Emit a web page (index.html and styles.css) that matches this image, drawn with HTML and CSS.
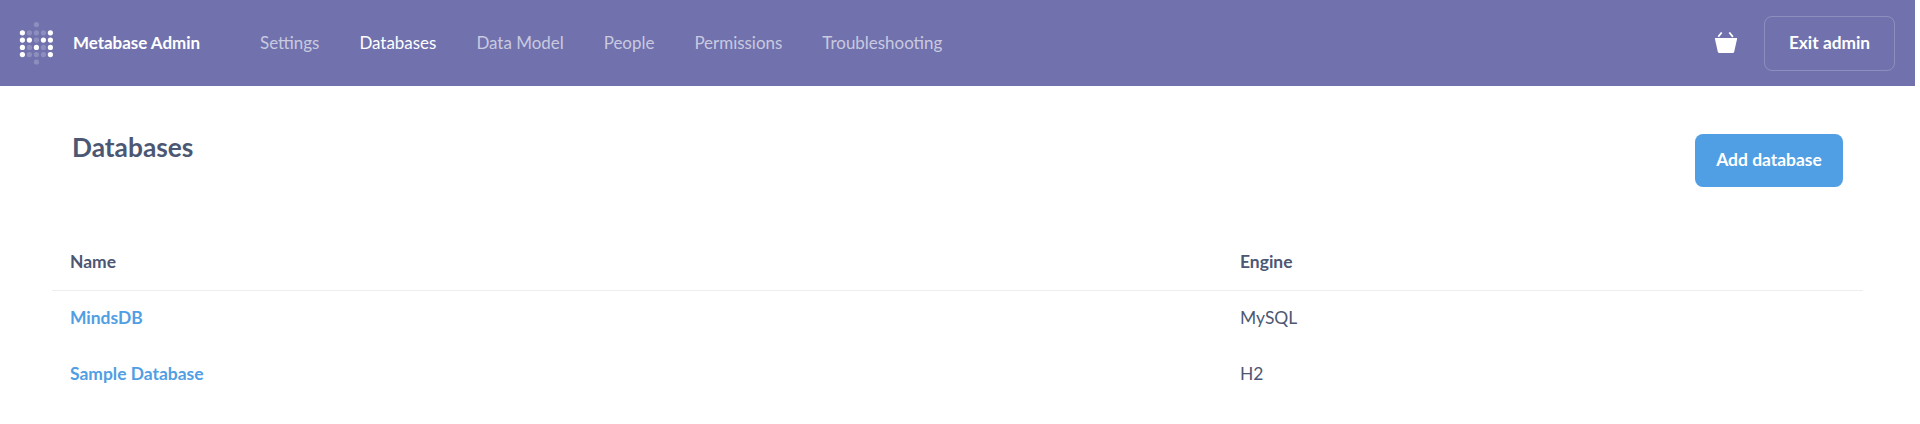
FILE: index.html
```html
<!DOCTYPE html>
<html lang="en">
<head>
<meta charset="utf-8">
<title>Databases - Metabase Admin</title>
<link rel="stylesheet" href="styles.css">
</head>
<body>
<header class="admin-bar">
  <svg class="logo" width="34" height="44" viewBox="0 0 34 44">
    <g fill="#fff">
      <circle cx="3.4" cy="11.8" r="2.6"/><circle cx="31.4" cy="11.8" r="2.6"/>
      <circle cx="3.4" cy="19.1" r="2.6"/><circle cx="10.4" cy="19.1" r="2.6"/><circle cx="24.4" cy="19.1" r="2.6"/><circle cx="31.4" cy="19.1" r="2.6"/>
      <circle cx="3.4" cy="26.4" r="2.6"/><circle cx="17.4" cy="26.4" r="2.6"/><circle cx="31.4" cy="26.4" r="2.6"/>
      <circle cx="3.4" cy="33.6" r="2.6"/><circle cx="31.4" cy="33.6" r="2.6"/>
    </g>
    <g fill="#fff" opacity="0.2">
      <circle cx="17.4" cy="3.6" r="2.6"/>
      <circle cx="10.4" cy="11.8" r="2.6"/><circle cx="17.4" cy="11.8" r="2.6"/><circle cx="24.4" cy="11.8" r="2.6"/>
      <circle cx="17.4" cy="19.1" r="2.6"/>
      <circle cx="10.4" cy="26.4" r="2.6"/><circle cx="24.4" cy="26.4" r="2.6"/>
      <circle cx="10.4" cy="33.6" r="2.6"/><circle cx="17.4" cy="33.6" r="2.6"/><circle cx="24.4" cy="33.6" r="2.6"/>
      <circle cx="17.4" cy="41" r="2.6"/>
    </g>
  </svg>
  <span class="brand">Metabase Admin</span>
  <nav class="nav">
    <a>Settings</a>
    <a class="active">Databases</a>
    <a>Data Model</a>
    <a>People</a>
    <a>Permissions</a>
    <a>Troubleshooting</a>
  </nav>
  <svg class="basket" width="24" height="22" viewBox="0 0 24 22">
    <path d="M1.3 6H22.7Q23.2 6 23.1 6.8L20.2 19.8Q19.9 21 18.8 21H5.2Q4.1 21 3.8 19.8L.9 6.8Q.8 6 1.3 6Z" fill="#fff"/>
    <path d="M4.3 4.800L7.700.5M18.900 4.800L15.300.5" stroke="#fff" stroke-width="1.800" fill="none"/>
  </svg>
  <a class="exit">Exit admin</a>
</header>
<main class="content">
  <div class="heading">
    <h1>Databases</h1>
    <a class="add">Add database</a>
  </div>
  <div class="table">
    <div class="row head"><span>Name</span><span>Engine</span></div>
    <div class="row"><a>MindsDB</a><span>MySQL</span></div>
    <div class="row"><a>Sample Database</a><span>H2</span></div>
  </div>
</main>
</body>
</html>
```
FILE: styles.css
```css
* {
  box-sizing: border-box;
}

body {
  margin: 0;
  background: #fff;
  color: #4c5773;
  font-family: Lato, sans-serif;
  font-size: 17.45px;
  line-height: 22px;
}

.admin-bar {
  display: flex;
  align-items: center;
  width: 1915px;
  height: 86px;
  padding: 0 20px 0 19px;
  background: #7172ad;
  color: #fff;
}

.brand {
  width: 187px;
  margin-left: 20px;
  font-size: 16.95px;
  font-weight: 700;
}

.nav {
  display: flex;
  flex: 1;
  gap: 40px;
  font-size: 16.95px;
}

.nav a {
  color: rgba(255, 255, 255, 0.63);
}

.nav .active {
  color: #fff;
}

.basket {
  margin-right: 26px;
}

.exit {
  width: 131px;
  height: 55px;
  border: 1px solid rgba(255, 255, 255, 0.2);
  border-radius: 8px;
  font-size: 17.3px;
  font-weight: 700;
  line-height: 51px;
  text-align: center;
}

.content {
  padding: 48px 57px 0 52px;
}

.heading {
  display: flex;
  justify-content: space-between;
  padding: 0 20px;
}

h1 {
  margin: 0;
  font-size: 26.3px;
  line-height: 26px;
}

.add {
  width: 148px;
  height: 53px;
  border-radius: 8px;
  background: #509ee3;
  color: #fff;
  font-weight: 700;
  line-height: 51px;
  text-align: center;
}

.table {
  margin-top: 47px;
}

.row {
  display: grid;
  grid-template-columns: 1170px 1fr;
  height: 56px;
  padding-left: 18px;
  line-height: 54px;
}

.row a {
  color: #509ee3;
  font-weight: 700;
}

.head {
  height: 57px;
  border-bottom: 1px solid #edeef0;
  font-weight: 700;
  line-height: 56px;
}
```
